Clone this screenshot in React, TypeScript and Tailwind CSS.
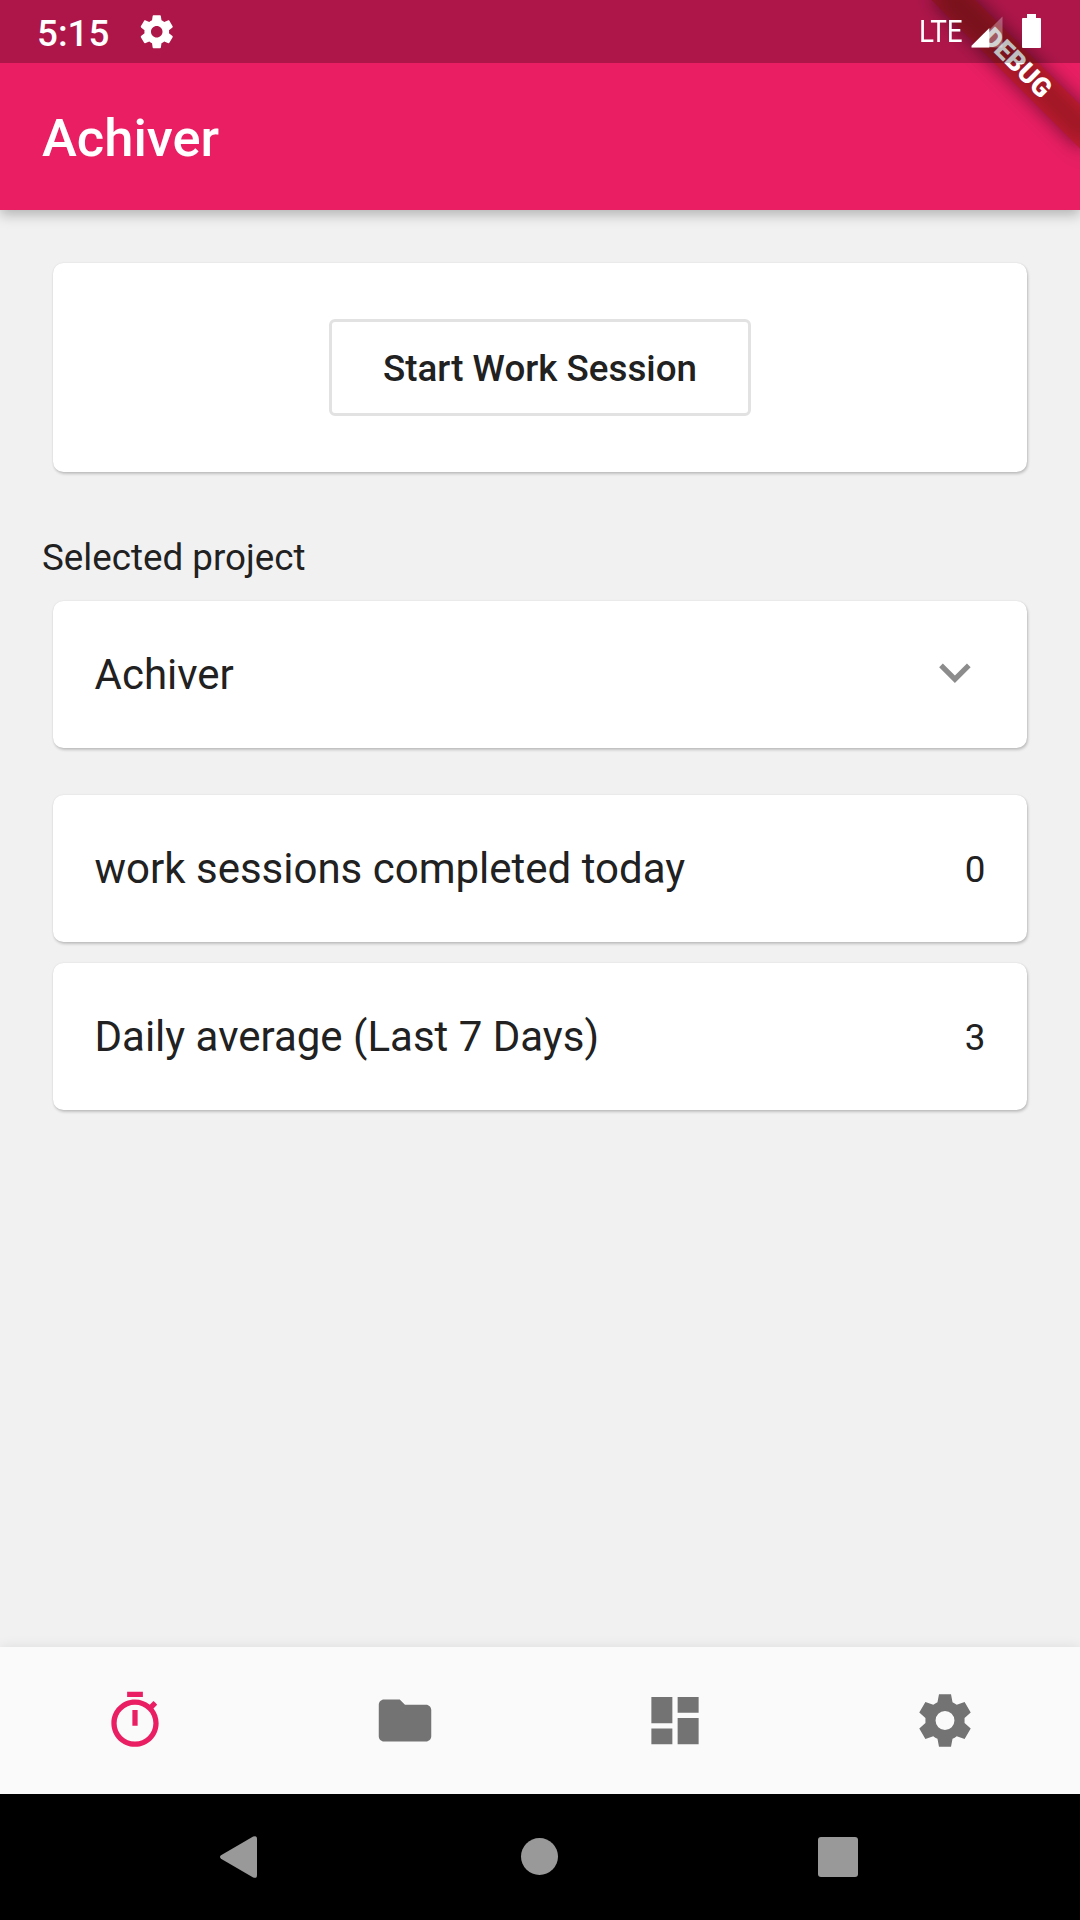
import React from "react";

const GEAR =
  "M19.43 12.98c.04-.32.07-.64.07-.98s-.03-.66-.07-.98l2.11-1.65c.19-.15.24-.42.12-.64l-2-3.46c-.12-.22-.39-.3-.61-.22l-2.49 1c-.52-.4-1.08-.73-1.69-.98l-.38-2.65C14.46 2.18 14.25 2 14 2h-4c-.25 0-.46.18-.49.42l-.38 2.65c-.61.25-1.17.59-1.69.98l-2.49-1c-.23-.09-.49 0-.61.22l-2 3.46c-.13.22-.07.49.12.64l2.11 1.65c-.04.32-.07.65-.07.98s.03.66.07.98l-2.11 1.65c-.19.15-.24.42-.12.64l2 3.46c.12.22.39.3.61.22l2.49-1c.52.4 1.08.73 1.69.98l.38 2.65c.03.24.24.42.49.42h4c.25 0 .46-.18.49-.42l.38-2.65c.61-.25 1.17-.59 1.69-.98l2.49 1c.23.09.49 0 .61-.22l2-3.46c.12-.22.07-.49-.12-.64l-2.11-1.65zM12 15.5c-1.93 0-3.5-1.57-3.5-3.5s1.57-3.5 3.5-3.5 3.5 1.57 3.5 3.5-1.57 3.5-3.5 3.5z";
const TIMER =
  "M15 1H9v2h6V1zm-4 13h2V8h-2v6zm8.03-6.61l1.42-1.42c-.43-.51-.9-.99-1.41-1.41l-1.42 1.42C16.07 4.74 14.12 4 12 4c-4.97 0-9 4.03-9 9s4.02 9 9 9 9-4.03 9-9c0-2.12-.74-4.07-1.97-5.61zM12 20c-3.87 0-7-3.13-7-7s3.13-7 7-7 7 3.13 7 7-3.13 7-7 7z";
const FOLDER =
  "M10 4H4c-1.1 0-1.99.9-1.99 2L2 18c0 1.1.9 2 2 2h16c1.1 0 2-.9 2-2V8c0-1.1-.9-2-2-2h-8l-2-2z";
const DASHBOARD = "M3 13h8V3H3v10zm0 8h8v-6H3v6zm10 0h8V11h-8v10zm0-18v6h8V3h-8z";
const SHARP_GEAR =
  "M9.71 2h4.58l.58 3.02a7.6 7.6 0 0 1 1.6.96L19.47 4.95L21.8 8.98L19.45 11.05v1.9L21.8 15.02L19.47 19.05L16.47 18.02a7.6 7.6 0 0 1-1.6.96L14.29 22H9.71L9.13 18.98a7.6 7.6 0 0 1-1.6-.96L4.53 19.05L2.2 15.02L4.55 12.95v-1.9L2.2 8.98L4.53 4.95L7.53 5.98a7.6 7.6 0 0 1 1.6-.96zM12 8.4a3.6 3.6 0 1 0 0 7.2a3.6 3.6 0 1 0 0-7.2z";
const EXPAND = "M16.59 8.59L12 13.17 7.41 8.59 6 10l6 6 6-6z";

function Icon({ d, className }: { d: string; className: string }) {
  return (
    <svg viewBox="0 0 24 24" fill="currentColor" fillRule="evenodd" className={className}>
      <path d={d} />
    </svg>
  );
}

function DebugBanner() {
  return (
    <div className="absolute top-0 right-0 h-0 w-0 rotate-45">
      <div className="absolute top-[73.5px] -left-[105px] h-[31.5px] w-[210px] bg-black/50 blur-[9.6px]" />
      <div className="absolute top-[73.5px] -left-[105px] flex h-[31.5px] w-[210px] items-center justify-center bg-[#b71c1c]/63 text-[26.775px] leading-none font-black text-white">
        DEBUG
      </div>
    </div>
  );
}

function StatusBar() {
  return (
    <div className="absolute inset-x-0 top-0 flex h-[63px] items-start bg-black/25 text-white">
      <span className="mt-3 ml-[37px] text-[36.75px] leading-[43px] font-medium">5:15</span>
      <Icon d={GEAR} className="mt-3 ml-7 size-[39.5px]" />
      <div className="ml-auto flex items-start pr-[39px]">
        <span className="mt-3 w-[52px] origin-left scale-x-[0.87] text-[32px] leading-[38px]">LTE</span>
        <svg viewBox="0 0 32 32" className="mt-[15.5px] size-8">
          <path d="M0.5 31.5L31.5 0.5V31.5z" fill="#fff" fillOpacity="0.3" />
          <path d="M0.5 29.8L18.3 12V31.5H0.5z" fill="#fff" />
        </svg>
        <svg viewBox="0 0 19 34" className="mt-3.5 ml-[19px] h-[34px] w-[19px]" fill="#fff">
          <path d="M5 0h9v4h4a1 1 0 0 1 1 1v28a1 1 0 0 1-1 1H1a1 1 0 0 1-1-1V5a1 1 0 0 1 1-1h4z" />
        </svg>
      </div>
    </div>
  );
}

function Card({ className = "", children }: { className?: string; children: React.ReactNode }) {
  return (
    <section
      className={
        "mx-[53px] flex items-center rounded-[10.5px] bg-white shadow-[1px_2px_3px_rgba(0,0,0,0.2),0_0_2px_rgba(0,0,0,0.1)] " +
        className
      }
    >
      {children}
    </section>
  );
}

function Row({ label, children, className }: { label: string; children: React.ReactNode; className: string }) {
  return (
    <Card className={"h-[147px] justify-between pr-[41.5px] pl-[41.5px] " + className}>
      <span className="text-[42px] leading-none">{label}</span>
      {children}
    </Card>
  );
}

export default function App() {
  return (
    <div className="relative flex h-[1920px] w-[1080px] flex-col overflow-hidden bg-[#f1f1f1] font-['Roboto',sans-serif] text-[#212121]">
      <header className="relative h-[210px] shrink-0 bg-[#e91e63] px-[42px] pt-[65px] shadow-[0_5px_12px_rgba(0,0,0,0.25)]">
        <h1 className="text-[52.5px] leading-[147px] font-medium text-white">Achiver</h1>
        <DebugBanner />
        <StatusBar />
      </header>

      <main className="flex-1">
        <Card className="mt-[53px] h-[209px] justify-center">
          <button className="h-[97px] w-[422px] rounded-md border-3 border-[#e2e2e2] pt-0.5 text-[36.75px] font-medium">
            Start Work Session
          </button>
        </Card>
        <h2 className="mt-[63.5px] ml-[42px] text-[36.75px] leading-[43px]">Selected project</h2>
        <Row label="Achiver" className="mt-[22.5px]">
          <Icon d={EXPAND} className="-mt-1 size-[63px] translate-x-[0.4px] text-[#8c8c8c]" />
        </Row>
        <Row label="work sessions completed today" className="mt-[47px]">
          <span className="pt-1 text-[36.75px] leading-none">0</span>
        </Row>
        <Row label="Daily average (Last 7 Days)" className="mt-[21px]">
          <span className="pt-1 text-[36.75px] leading-none">3</span>
        </Row>
      </main>

      <nav className="grid h-[147px] shrink-0 grid-cols-4 place-items-center bg-[#fafafa] text-[#737373] shadow-[0_0_12px_rgba(0,0,0,0.09)]">
        <Icon d={TIMER} className="mr-px size-[63px] translate-x-[0.5px] text-[#e91e63]" />
        <Icon d={FOLDER} className="mr-px size-[63px] translate-x-[0.5px]" />
        <Icon d={DASHBOARD} className="mr-px size-[63px] translate-x-[0.5px]" />
        <Icon d={SHARP_GEAR} className="mr-px size-[63px] translate-x-[0.5px]" />
      </nav>

      <footer className="flex h-[126px] shrink-0 items-center bg-black pl-[220px] text-[#999]">
        <svg viewBox="0 0 37 42" className="h-[42px] w-[37px]" fill="currentColor">
          <path d="M1 19.3L33.2 0.6Q37 -1 37 3V39Q37 43 33.2 41.4L1 22.7Q-1 21 1 19.3z" />
        </svg>
        <span className="-mt-px ml-[264px] size-[37px] rounded-full bg-[#999]" />
        <span className="ml-[260px] size-10 rounded-[3px] bg-[#999]" />
      </footer>
    </div>
  );
}
